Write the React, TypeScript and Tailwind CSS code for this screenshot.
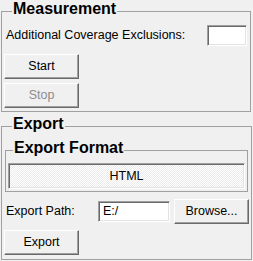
import React from "react";

const btn =
  "flex items-center justify-center h-[25px] w-[75px] bg-[#f0f0f0] border border-t-white border-l-white border-r-[#696969] border-b-[#696969] shadow-[inset_-1px_-1px_0_#a0a0a0] text-[12.5px] leading-none";
const sunken =
  "border border-t-[#a0a0a0] border-l-[#a0a0a0] border-b-white border-r-white shadow-[inset_1px_1px_0_#696969,inset_-1px_-1px_0_#e3e3e3]";

export default function App() {
  return (
    <div
      className="w-[253px] h-[261px] bg-[#f0f0f0] text-black overflow-hidden"
      style={{ fontFamily: '"Liberation Sans", Arial, sans-serif' }}
    >
      <fieldset className="ml-[1px] w-[250px] border border-[#a0a0a0] px-[2px] pb-[3px]">
        <legend className="ml-[8px] px-[1px] pb-[4px] text-[16px] font-bold leading-[18px]">
          Measurement
        </legend>
        <div className="mt-[3px] flex items-center justify-between">
          <span className="ml-[2px] text-[12.5px] leading-none">Additional Coverage Exclusions:</span>
          <div className={`h-[21px] w-[40px] mr-[1px] bg-white ${sunken}`} />
        </div>
        <div className="mt-[8px] flex flex-col gap-[4px]">
          <button className={btn}>Start</button>
          <button className={`${btn} text-[#8d8d8d]`} disabled>
            Stop
          </button>
        </div>
      </fieldset>

      <fieldset className="ml-[1px] mt-[3px] w-[250px] border border-[#a0a0a0] px-[2px] pb-[4px]">
        <legend className="ml-[8px] px-[1px] pb-[4px] text-[16px] font-bold leading-[18px]">
          Export
        </legend>
        <fieldset className="ml-[1px] mt-[2px] w-[243px] border border-[#a0a0a0] px-[2px] pb-[2px]">
          <legend className="ml-[5px] px-[1px] pb-[4px] text-[16px] font-bold leading-[18px]">
            Export Format
          </legend>
          <div
            className={`mt-[2px] flex h-[26px] w-[237px] items-center justify-center text-[12.5px] leading-none bg-[repeating-conic-gradient(#ffffff_0_25%,#ebebeb_0_50%)] bg-[length:2px_2px] ${sunken}`}
          >
            HTML
          </div>
        </fieldset>
        <div className="mt-[7px] flex h-[25px] items-center">
          <span className="ml-[2px] w-[92px] text-[12.5px] leading-none">Export Path:</span>
          <div className={`flex h-[21px] w-[72px] items-center bg-white pl-[4px] text-[12.5px] leading-none ${sunken}`}>
            E:/
          </div>
          <button className={`${btn} ml-[4px]`}>Browse...</button>
        </div>
        <button className={`${btn} mt-[6px]`}>Export</button>
      </fieldset>
    </div>
  );
}
